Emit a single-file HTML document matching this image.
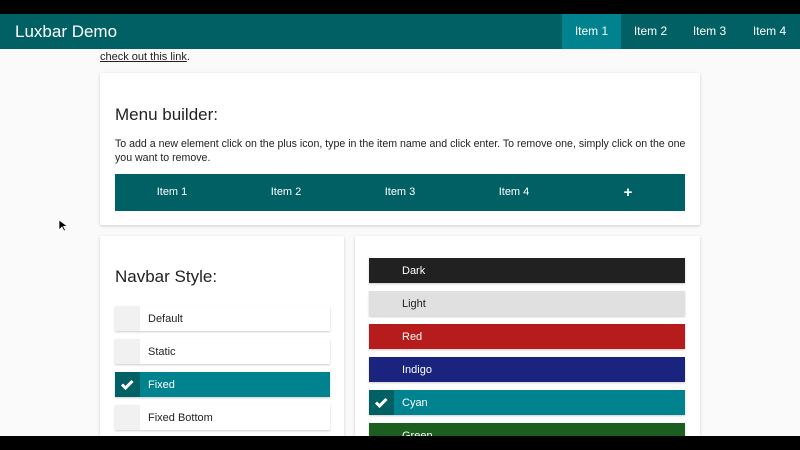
<!DOCTYPE html>
<html><head><meta charset="utf-8"><style>
*{margin:0;padding:0;box-sizing:border-box}
body{width:800px;height:450px;overflow:hidden;background:#fafafa;font-family:"Liberation Sans",sans-serif;position:relative;color:#222}
.a{position:absolute}
.card{position:absolute;background:#fff;box-shadow:0 1px 3px rgba(0,0,0,.18)}
.nav{left:0;top:14px;width:800px;height:35px;background:#006064;color:#fff}
.ni{position:absolute;top:0;height:35px;line-height:35px;font-size:12px;text-align:center;color:#fff}
.row{position:absolute;height:25px;line-height:25px;font-size:11px;box-shadow:0 1px 2px rgba(0,0,0,.2)}
.row .ic{position:absolute;left:0;top:0;width:25px;height:25px}
.row span{position:absolute;left:33px;top:1px}
.mb{position:absolute;top:0;height:37px;line-height:37px;color:#fff;font-size:11px;text-align:center}
</style></head><body>
<div class="a" style="left:0;top:0;width:800px;height:14px;background:#000"></div>
<div class="a nav">
<div class="a" style="left:15px;top:0;line-height:35px;font-size:17px">Luxbar Demo</div>
<div class="ni" style="left:562px;width:59px;background:#00838f">Item 1</div>
<div class="ni" style="left:621px;width:59px">Item 2</div>
<div class="ni" style="left:680px;width:59px">Item 3</div>
<div class="ni" style="left:739px;width:61px">Item 4</div>
</div>
<div class="a" style="left:100px;top:50px;font-size:11px;line-height:14px"><u>check out this link</u>.</div>
<div class="card" style="left:100px;top:73px;width:600px;height:152px">
<div class="a" style="left:15px;top:32px;font-size:17px">Menu builder:</div>
<div class="a" style="left:15px;top:64px;width:575px;font-size:10.6px;line-height:14px">To add a new element click on the plus icon, type in the item name and click enter. To remove one, simply click on the one you want to remove.</div>
<div class="a" style="left:15px;top:101px;width:570px;height:37px;background:#006064">
<div class="mb" style="left:0;width:114px">Item 1</div>
<div class="mb" style="left:114px;width:114px">Item 2</div>
<div class="mb" style="left:228px;width:114px">Item 3</div>
<div class="mb" style="left:342px;width:114px">Item 4</div>
<div class="mb" style="left:456px;width:114px;font-size:15px;font-weight:bold">+</div>
</div></div>
<div class="card" style="left:100px;top:236px;width:244px;height:214px">
<div class="a" style="left:15px;top:31px;font-size:17px">Navbar Style:</div>
</div>
<div class="card" style="left:355px;top:236px;width:345px;height:214px"></div>
<div class="row" style="left:115px;top:306px;width:215px;background:#fff"><div class="ic" style="background:#f1f1f1"></div><span>Default</span></div>
<div class="row" style="left:115px;top:339px;width:215px;background:#fff"><div class="ic" style="background:#f1f1f1"></div><span>Static</span></div>
<div class="row" style="left:115px;top:372px;width:215px;background:#00838f;color:#fff"><div class="ic" style="background:#006064"><svg width="25" height="25"><path d="M7 12.5l3.5 3.5 7-7" stroke="#fff" stroke-width="3" fill="none"/></svg></div><span>Fixed</span></div>
<div class="row" style="left:115px;top:405px;width:215px;background:#fff"><div class="ic" style="background:#f1f1f1"></div><span>Fixed Bottom</span></div>
<div class="row" style="left:369px;top:258px;width:316px;background:#212121;color:#fff"><span>Dark</span></div>
<div class="row" style="left:369px;top:291px;width:316px;background:#e0e0e0;color:#222"><span>Light</span></div>
<div class="row" style="left:369px;top:324px;width:316px;background:#b71c1c;color:#fff"><span>Red</span></div>
<div class="row" style="left:369px;top:357px;width:316px;background:#1a237e;color:#fff"><span>Indigo</span></div>
<div class="row" style="left:369px;top:390px;width:316px;background:#00838f;color:#fff"><div class="ic" style="background:#006064"><svg width="25" height="25"><path d="M7 12.5l3.5 3.5 7-7" stroke="#fff" stroke-width="3" fill="none"/></svg></div><span>Cyan</span></div>
<div class="row" style="left:369px;top:423px;width:316px;background:#1b5e20;color:#fff"><span>Green</span></div>
<div class="a" style="left:0;top:436px;width:800px;height:14px;background:#000"></div>
<svg class="a" style="left:58px;top:219px" width="10" height="14"><path d="M1 1v10l3-3 2 4 1.5-.7-2-4h4z" fill="#000" stroke="#fff" stroke-width=".7"/></svg>
</body></html>
